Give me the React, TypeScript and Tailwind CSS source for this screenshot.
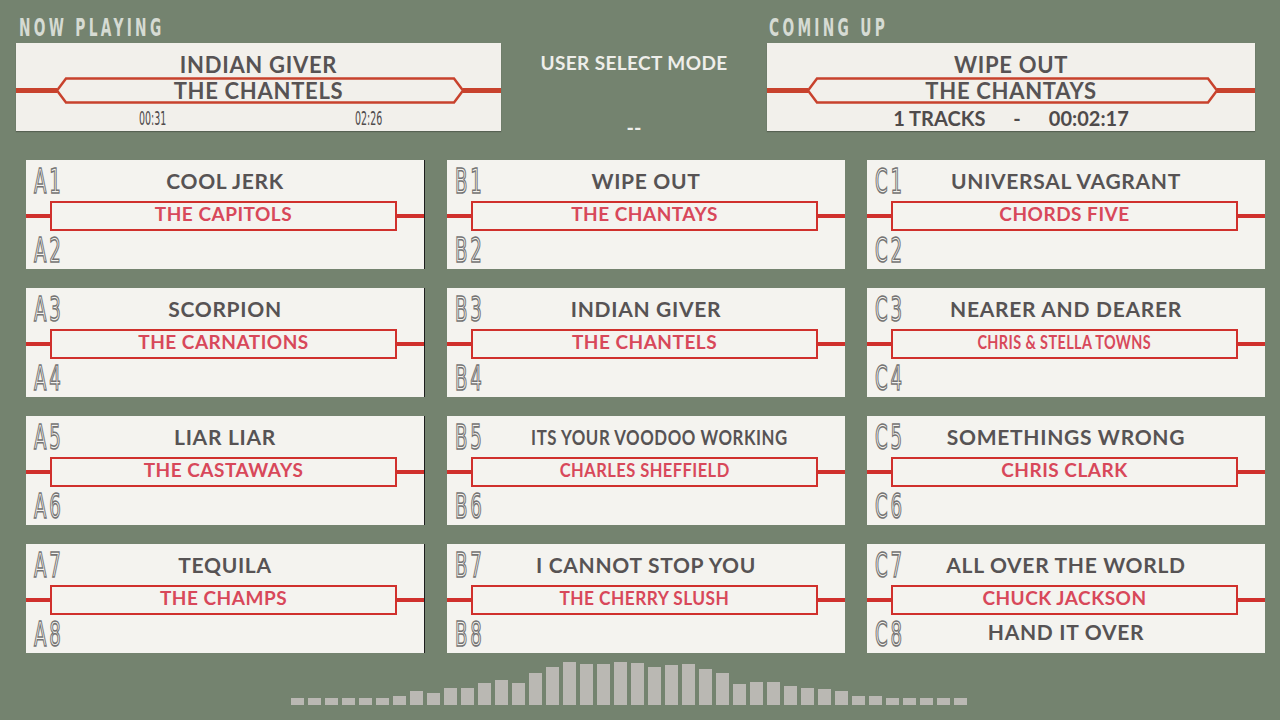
import React from "react";

const geo = "font-['Lato','Open_Sans',sans-serif]";
const dv = "font-['DejaVu_Sans','Liberation_Sans',sans-serif]";

type Slot = {
  top: string;
  bottom: string;
  title: string;
  artist: string;
  flip?: string;
  titleFit?: string;
  artistFit?: string;
};

const rows: Slot[][] = [
  [
    { top: "A1", bottom: "A2", title: "COOL JERK", artist: "THE CAPITOLS" },
    { top: "B1", bottom: "B2", title: "WIPE OUT", artist: "THE CHANTAYS" },
    { top: "C1", bottom: "C2", title: "UNIVERSAL VAGRANT", artist: "CHORDS FIVE" },
  ],
  [
    { top: "A3", bottom: "A4", title: "SCORPION", artist: "THE CARNATIONS" },
    { top: "B3", bottom: "B4", title: "INDIAN GIVER", artist: "THE CHANTELS" },
    { top: "C3", bottom: "C4", title: "NEARER AND DEARER", artist: "CHRIS & STELLA TOWNS", artistFit: "scale-x-[0.76]" },
  ],
  [
    { top: "A5", bottom: "A6", title: "LIAR LIAR", artist: "THE CASTAWAYS" },
    {
      top: "B5",
      bottom: "B6",
      title: "ITS YOUR VOODOO WORKING",
      artist: "CHARLES SHEFFIELD",
      titleFit: "scale-x-[0.8]",
      artistFit: "scale-x-[0.87]",
    },
    { top: "C5", bottom: "C6", title: "SOMETHINGS WRONG", artist: "CHRIS CLARK" },
  ],
  [
    { top: "A7", bottom: "A8", title: "TEQUILA", artist: "THE CHAMPS" },
    { top: "B7", bottom: "B8", title: "I CANNOT STOP YOU", artist: "THE CHERRY SLUSH", artistFit: "scale-x-[0.91]" },
    { top: "C7", bottom: "C8", title: "ALL OVER THE WORLD", artist: "CHUCK JACKSON", flip: "HAND IT OVER" },
  ],
];

const levels = [
  7, 7, 7, 7, 7, 7, 9, 14, 12, 17, 17, 22, 25, 22, 32, 38, 43, 41, 41, 43,
  42, 38, 40, 41, 36, 32, 21, 23, 23, 19, 17, 16, 14, 9, 9, 7, 7, 7, 7, 7,
];

function SlotLabel({ text }: { text: string }) {
  return (
    <span
      className={`${dv} inline-block origin-left scale-x-[0.55] whitespace-nowrap text-[33px] leading-none tracking-[5px] text-[#f4f3ef] [-webkit-text-stroke:1.6px_#757373]`}
    >
      {text}
    </span>
  );
}

function SlotCard({ slot, edge }: { slot: Slot; edge: boolean }) {
  return (
    <div className={`flex h-[109px] flex-col bg-[#f4f3ef] ${edge ? "border-r border-r-[#1d1d1d]" : ""}`}>
      <div className="grid h-[41px] grid-cols-[52px_1fr_52px] items-center">
        <div className="pl-[8px] pt-[2px]">
          <SlotLabel text={slot.top} />
        </div>
        <div className="text-center">
          <span
            className={`${geo} inline-block whitespace-nowrap text-[21px] font-bold tracking-[0.7px] text-[#575354] ${slot.titleFit ?? ""}`}
          >
            {slot.title}
          </span>
        </div>
        <div />
      </div>
      <div className="flex h-[30px] items-center">
        <div className="h-[4px] w-[24px] bg-[#d0302c]" />
        <div className="flex h-[30px] flex-1 items-center justify-center border-[2.5px] border-[#d0302c]">
          <span
            className={`${geo} -mt-[3px] inline-block whitespace-nowrap text-[19px] font-bold tracking-[0.5px] text-[#d8485a] ${slot.artistFit ?? ""}`}
          >
            {slot.artist}
          </span>
        </div>
        <div className="h-[4px] w-[27px] bg-[#d0302c]" />
      </div>
      <div className="grid flex-1 grid-cols-[52px_1fr_52px] items-center">
        <div className="pl-[8px] pt-[1px]">
          <SlotLabel text={slot.bottom} />
        </div>
        <div className={`${geo} -mt-[4px] text-center text-[21px] font-bold tracking-[0.7px] text-[#575354]`}>
          {slot.flip ?? ""}
        </div>
        <div />
      </div>
    </div>
  );
}

function Hex({ width }: { width: number }) {
  const l = 41;
  const r = width - 38;
  return (
    <svg className="absolute inset-0" width={width} height={27} viewBox={`0 0 ${width} 27`}>
      <line x1={0} y1={13.5} x2={l} y2={13.5} stroke="#c8422d" strokeWidth={5} />
      <line x1={r} y1={13.5} x2={width} y2={13.5} stroke="#c8422d" strokeWidth={5} />
      <polygon
        points={`${l},13.5 ${l + 9},1.5 ${r - 9},1.5 ${r},13.5 ${r - 9},25.5 ${l + 9},25.5`}
        fill="none"
        stroke="#c8422d"
        strokeWidth={2.5}
      />
    </svg>
  );
}

function NowCard({
  width,
  title,
  artist,
  children,
}: {
  width: number;
  title: string;
  artist: string;
  children: React.ReactNode;
}) {
  return (
    <div className="flex h-[88px] flex-col bg-[#f2f0eb] shadow-[0_1px_1px_rgba(0,0,0,0.25)]">
      <div className={`${geo} flex h-[34px] items-end justify-center pb-[1px] text-[22px] font-bold leading-none tracking-[0.7px] text-[#575354]`}>
        {title}
      </div>
      <div className="relative flex h-[27px] items-center justify-center" style={{ width }}>
        <Hex width={width} />
        <span className={`${geo} relative text-[22px] font-bold leading-none tracking-[0.7px] text-[#575354]`}>
          {artist}
        </span>
      </div>
      <div className="flex-1">{children}</div>
    </div>
  );
}

function Heading({ text }: { text: string }) {
  return (
    <span
      className={`${dv} inline-block origin-left scale-x-[0.55] whitespace-nowrap text-[25px] font-bold leading-[30px] tracking-[6px] text-[#d6dbd3]`}
    >
      {text}
    </span>
  );
}

export default function App() {
  return (
    <div className="relative h-[720px] w-[1280px] overflow-hidden bg-[#74836f]">
      <div className="flex h-[132px] items-start pt-[13px]">
        <div className="ml-[16px] w-[485px]">
          <div className="h-[30px] pl-[3px]">
            <Heading text="NOW PLAYING" />
          </div>
          <NowCard width={485} title="INDIAN GIVER" artist="THE CHANTELS">
            <div className={`${dv} flex pt-[5px] text-[19px] leading-none text-[#4f4b4b]`}>
              <span className="ml-[123px] inline-block origin-left scale-x-[0.5]">00:31</span>
              <span className="ml-[161px] inline-block origin-left scale-x-[0.5]">02:26</span>
            </div>
          </NowCard>
        </div>
        <div className="flex w-[266px] flex-col items-center">
          <div className={`${geo} mt-[38px] text-[19px] font-bold leading-[24px] tracking-[0.4px] text-[#eeeeea]`}>
            USER SELECT MODE
          </div>
          <div className={`${geo} mt-[42px] text-[20px] font-bold leading-none text-[#eeeeea]`}>--</div>
        </div>
        <div className="w-[488px]">
          <div className="h-[30px] pl-[2px]">
            <Heading text="COMING UP" />
          </div>
          <NowCard width={488} title="WIPE OUT" artist="THE CHANTAYS">
            <div className={`${geo} flex justify-center gap-[28px] pt-[4px] text-[20px] font-bold leading-none text-[#4f4b4b]`}>
              <span>1 TRACKS</span>
              <span>-</span>
              <span>00:02:17</span>
            </div>
          </NowCard>
        </div>
      </div>

      <div className="ml-[26px] mt-[28px] grid w-[1239px] grid-cols-[399px_398px_398px] gap-x-[22px] gap-y-[19px]">
        {rows.map((row) =>
          row.map((slot, i) => <SlotCard key={slot.top} slot={slot} edge={i === 0} />)
        )}
      </div>

      <div className="flex h-[52px] items-end gap-[4px] pl-[291px]">
        {levels.map((h, i) => (
          <div key={i} className="w-[13px] bg-[#bab8b3]" style={{ height: h }} />
        ))}
      </div>
    </div>
  );
}
